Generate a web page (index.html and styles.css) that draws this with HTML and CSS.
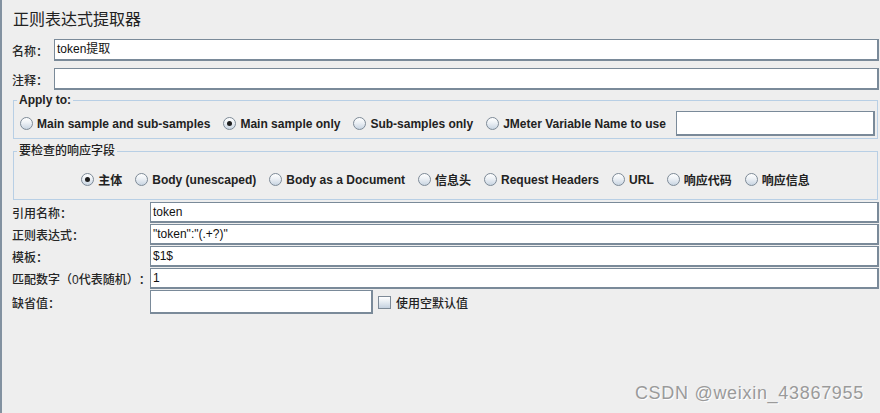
FILE: index.html
```html
<!DOCTYPE html>
<html lang="zh-CN">
<head>
<meta charset="utf-8">
<title>正则表达式提取器</title>
<link rel="stylesheet" href="styles.css">
</head>
<body>
<div class="panel">
  <h1 class="title">正则表达式提取器</h1>

  <div class="name-row">
    <span class="lbl lbl-short">名称：</span>
    <div class="tf">token提取</div>
  </div>
  <div class="name-row name-row-2">
    <span class="lbl lbl-short">注释：</span>
    <div class="tf"></div>
  </div>

  <fieldset class="group group-apply">
    <legend>Apply to:</legend>
    <div class="radio-row">
      <span class="radio"><span class="rb"></span>Main sample and sub-samples</span>
      <span class="radio"><span class="rb on"></span>Main sample only</span>
      <span class="radio"><span class="rb"></span>Sub-samples only</span>
      <span class="radio"><span class="rb"></span>JMeter Variable Name to use</span>
      <div class="tf tf-var"></div>
    </div>
  </fieldset>

  <fieldset class="group group-field">
    <legend>要检查的响应字段</legend>
    <div class="radio-row radio-row-center">
      <span class="radio"><span class="rb on"></span>主体</span>
      <span class="radio"><span class="rb"></span>Body (unescaped)</span>
      <span class="radio"><span class="rb"></span>Body as a Document</span>
      <span class="radio"><span class="rb"></span>信息头</span>
      <span class="radio"><span class="rb"></span>Request Headers</span>
      <span class="radio"><span class="rb"></span>URL</span>
      <span class="radio"><span class="rb"></span>响应代码</span>
      <span class="radio"><span class="rb"></span>响应信息</span>
    </div>
  </fieldset>

  <div class="form-row form-row-first">
    <span class="lbl lbl-wide">引用名称：</span>
    <div class="tf">token</div>
  </div>
  <div class="form-row">
    <span class="lbl lbl-wide">正则表达式：</span>
    <div class="tf">"token":"(.+?)"</div>
  </div>
  <div class="form-row">
    <span class="lbl lbl-wide">模板：</span>
    <div class="tf">$1$</div>
  </div>
  <div class="form-row">
    <span class="lbl lbl-wide">匹配数字（0代表随机）：</span>
    <div class="tf">1</div>
  </div>
  <div class="form-row form-row-last">
    <span class="lbl lbl-wide">缺省值：</span>
    <div class="tf tf-default"></div>
    <span class="check"><span class="cb"></span>使用空默认值</span>
  </div>

  <div class="watermark">CSDN @weixin_43867955</div>
</div>
</body>
</html>
```

FILE: styles.css
```css
* { box-sizing: border-box; }

html, body {
  margin: 0;
  padding: 0;
  background: #eeeeee;
}

body {
  font-family: "Liberation Sans", "Noto Sans CJK SC", sans-serif;
  font-size: 12px;
  color: #222222;
  text-spacing-trim: space-all;
}

.panel {
  position: relative;
  min-height: 413px;
  border-left: 2px solid #8291a0;
  padding: 0 1px 0 10px;
}

.title {
  margin: 0;
  padding: 10px 0 0 1px;
  height: 30px;
  font-size: 16px;
  line-height: 20px;
  font-weight: 400;
  color: #222222;
}

.name-row {
  display: flex;
  align-items: center;
  height: 22px;
  margin-top: 9px;
}
.name-row-2 { margin-top: 7px; }

.lbl {
  flex: none;
  font-weight: 500;
  white-space: nowrap;
  color: #262626;
}
.lbl-short { width: 42px; }
.lbl-wide { width: 138px; }

.tf {
  flex: 1;
  height: 100%;
  background: #ffffff;
  border: 1px solid #7a8a99;
  border-right-width: 2px;
  border-bottom-width: 2px;
  padding: 0 2px;
  font-weight: 400;
  line-height: 19px;
  color: #111111;
  white-space: nowrap;
  overflow: hidden;
}

.group {
  margin: 3px 1px 0 1px;
  border: 1px solid #b8cfe5;
  min-width: 0;
}
.group legend {
  padding: 0 2px;
  margin-left: -3px;
  line-height: 14px;
  height: 14px;
  font-weight: bold;
  color: #222222;
}
.group-field legend { font-weight: 500; }

.group-apply { padding: 4px 2px 2px 6px; }
.group-field { margin-top: 5px; padding: 14px 4px 12px 6px; }

.radio-row {
  display: flex;
  align-items: center;
  gap: 13px;
  height: 25px;
}
.radio-row-center {
  justify-content: center;
  height: 15px;
  margin-left: -2px;
}

.radio {
  display: inline-flex;
  align-items: center;
  gap: 4px;
  font-weight: bold;
  white-space: nowrap;
  color: #222222;
}

.rb {
  position: relative;
  width: 13px;
  height: 13px;
  border-radius: 50%;
  border: 1px solid #7d8a97;
  background: linear-gradient(180deg, #ffffff 0%, #eef2f6 40%, #c9d5e2 100%);
}
.rb.on::after {
  content: "";
  position: absolute;
  left: 3px;
  top: 3px;
  width: 5px;
  height: 5px;
  border-radius: 50%;
  background: #1e1e1e;
}

.tf-var {
  flex: 1;
  height: 25px;
  margin-left: -3px;
}

.form-row {
  display: flex;
  align-items: center;
  height: 21px;
  margin-top: 1px;
}
.form-row-first { margin-top: 2px; }
.form-row-last { height: 24px; }

.tf-default {
  flex: none;
  width: 223px;
}

.check {
  display: inline-flex;
  align-items: center;
  gap: 5px;
  margin-left: 5px;
  font-weight: 500;
  color: #222222;
}
.cb {
  width: 13px;
  height: 13px;
  border: 1px solid #7d8a97;
  background: linear-gradient(180deg, #ffffff 0%, #e6ecf2 45%, #c4d1df 100%);
}

.watermark {
  position: absolute;
  right: 16px;
  bottom: 9px;
  font-family: "Liberation Sans", sans-serif;
  font-size: 18px;
  letter-spacing: 0.7px;
  color: #9a9a9a;
  text-shadow: 1px 1px 0 #ffffff;
}
```
